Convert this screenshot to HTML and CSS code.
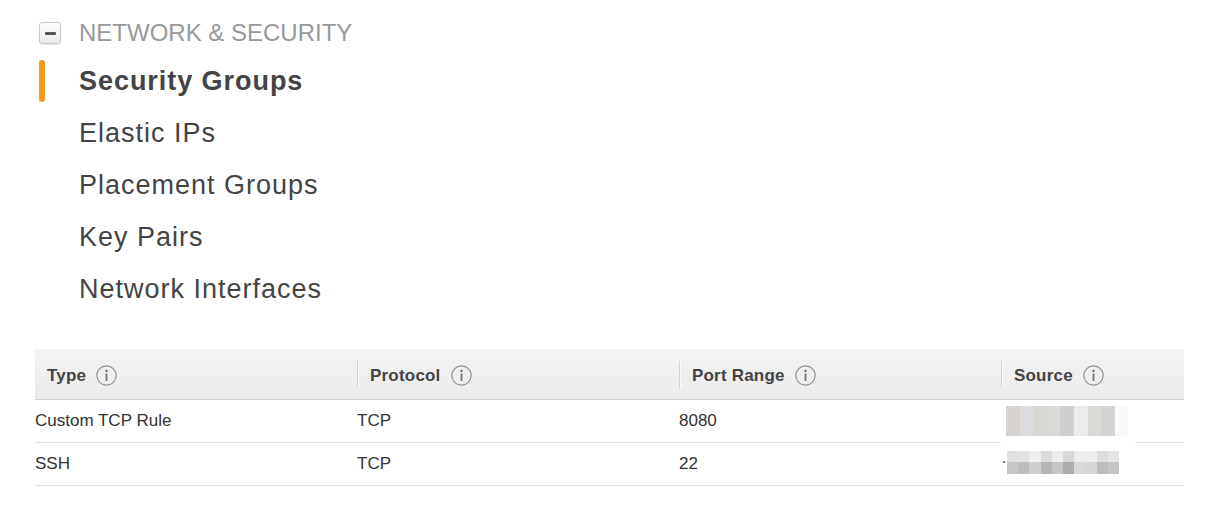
FILE: index.html
```html
<!DOCTYPE html>
<html>
<head>
<meta charset="utf-8">
<link rel="stylesheet" href="styles.css">
</head>
<body>
<nav class="nav">
  <div class="nav-head">
    <span class="toggle"><span class="toggle-bar"></span></span>
    <span class="nav-title">NETWORK &amp; SECURITY</span>
  </div>
  <ul class="nav-list">
    <li class="nav-item active">Security Groups</li>
    <li class="nav-item">Elastic IPs</li>
    <li class="nav-item">Placement Groups</li>
    <li class="nav-item">Key Pairs</li>
    <li class="nav-item">Network Interfaces</li>
  </ul>
</nav>

<div class="rules">
  <div class="row head">
    <div class="cell first">Type <svg class="info" viewBox="0 0 20 20"><circle cx="10" cy="10" r="9.2" fill="none" stroke="#8f8f8f" stroke-width="1.1"/><circle cx="10" cy="5.6" r="1.2" fill="#7a7a7a"/><rect x="9.1" y="8.1" width="1.8" height="7" fill="#7a7a7a"/></svg></div>
    <div class="cell sep">Protocol <svg class="info" viewBox="0 0 20 20"><circle cx="10" cy="10" r="9.2" fill="none" stroke="#8f8f8f" stroke-width="1.1"/><circle cx="10" cy="5.6" r="1.2" fill="#7a7a7a"/><rect x="9.1" y="8.1" width="1.8" height="7" fill="#7a7a7a"/></svg></div>
    <div class="cell sep">Port Range <svg class="info" viewBox="0 0 20 20"><circle cx="10" cy="10" r="9.2" fill="none" stroke="#8f8f8f" stroke-width="1.1"/><circle cx="10" cy="5.6" r="1.2" fill="#7a7a7a"/><rect x="9.1" y="8.1" width="1.8" height="7" fill="#7a7a7a"/></svg></div>
    <div class="cell sep">Source <svg class="info" viewBox="0 0 20 20"><circle cx="10" cy="10" r="9.2" fill="none" stroke="#8f8f8f" stroke-width="1.1"/><circle cx="10" cy="5.6" r="1.2" fill="#7a7a7a"/><rect x="9.1" y="8.1" width="1.8" height="7" fill="#7a7a7a"/></svg></div>
  </div>
  <div class="row body">
    <div class="cell">Custom TCP Rule</div>
    <div class="cell">TCP</div>
    <div class="cell">8080</div>
    <div class="cell src">
      <div class="blur blur-a">
        <div class="tiles">
          <span style="background:#d6d3d0"></span><span style="background:#dcdcde"></span><span style="background:#d9d7d4"></span><span style="background:#dbdad7"></span><span style="background:#cfcfcf"></span><span style="background:#ebebed"></span><span style="background:#dbdad6"></span><span style="background:#d3d3d5"></span><span style="background:#f8f9fb"></span>
        </div>
      </div>
    </div>
  </div>
  <div class="row body">
    <div class="cell">SSH</div>
    <div class="cell">TCP</div>
    <div class="cell">22</div>
    <div class="cell src">
      <div class="blur blur-b">
        <span class="dot"></span>
        <div class="tiles-b">
          <div class="tiles small">
            <span style="background:#e0e0e0"></span><span style="background:#e3e3e5"></span><span style="background:#eeeeee"></span><span style="background:#dcdcdc"></span><span style="background:#ececec"></span><span style="background:#d8d8d8"></span><span style="background:#ededee"></span><span style="background:#eeeeee"></span><span style="background:#dddddd"></span><span style="background:#e5e5e5"></span>
          </div>
          <div class="tiles small">
            <span style="background:#c6c6c6"></span><span style="background:#bdbdbf"></span><span style="background:#cfcfcf"></span><span style="background:#b5b5b5"></span><span style="background:#c5c5c5"></span><span style="background:#adadad"></span><span style="background:#d9d9db"></span><span style="background:#d6d6d6"></span><span style="background:#bcbcbc"></span><span style="background:#c4c4c4"></span>
          </div>
        </div>
      </div>
    </div>
  </div>
</div>
</body>
</html>
```

FILE: styles.css
```css
* { box-sizing: border-box; }
html, body { margin: 0; padding: 0; background: #fff; }
body {
  font-family: "Liberation Sans", Arial, Helvetica, sans-serif;
  color: #444;
}

.nav { padding: 17px 0 0 39px; }

.nav-head {
  display: flex;
  align-items: center;
  height: 32px;
}
.toggle {
  width: 22px;
  height: 22px;
  border: 1px solid #c9c9c9;
  border-radius: 3px;
  background: linear-gradient(#ffffff, #ebebeb);
  display: flex;
  align-items: center;
  justify-content: center;
  margin-right: 18px;
  box-shadow: 0 1px 1px rgba(0,0,0,0.08);
}
.toggle-bar {
  width: 11px;
  height: 3px;
  background: #555;
  border-radius: 1px;
}
.nav-title {
  font-size: 24px;
  color: #999;
}

.nav-list {
  list-style: none;
  margin: 6px 0 0 0;
  padding: 0;
}
.nav-item {
  position: relative;
  height: 52px;
  line-height: 52px;
  padding-left: 40px;
  font-size: 27px;
  letter-spacing: 1px;
  color: #444;
}
.nav-item.active {
  font-weight: bold;
  letter-spacing: 0.95px;
}
.nav-item.active::before {
  content: "";
  position: absolute;
  left: 0;
  top: 5px;
  width: 6px;
  height: 42px;
  background: #f7961c;
  border-radius: 3px;
}

.rules {
  margin: 34px 0 0 35px;
  width: 1149px;
}
.row {
  display: grid;
  grid-template-columns: 322px 322px 322px 183px;
}
.row.head {
  height: 51px;
  background: linear-gradient(#f3f3f3, #ebebeb);
  border-bottom: 1px solid #cfcfcf;
  font-weight: bold;
  font-size: 17px;
  letter-spacing: 0.2px;
  color: #444;
}
.row.head .cell {
  display: flex;
  align-items: center;
  padding: 3px 0 0 13px;
  position: relative;
}
.row.head .cell.first { padding-left: 12px; }
.row.head .cell.sep::before {
  content: "";
  position: absolute;
  left: 0;
  top: 12px;
  height: 27px;
  width: 1px;
  background: #d2d2d2;
  box-shadow: 1px 0 0 #fafafa;
}
.info {
  width: 21px;
  height: 21px;
  margin-left: 10px;
}

.row.body {
  height: 43px;
  border-bottom: 1px solid #dedede;
  font-size: 17px;
  color: #333;
}
.row.body .cell {
  display: flex;
  align-items: center;
}
.row.body .cell.src { position: relative; }

.blur {
  position: absolute;
  left: 0;
  background: #fff;
}
.blur-a {
  top: 4px;
  width: 134px;
  height: 47px;
  padding: 2px 0 0 5px;
  z-index: 2;
}
.tiles { display: flex; }
.tiles span { width: 13.6px; height: 30px; }
.blur-b {
  top: 7px;
  display: flex;
  align-items: center;
  padding-left: 2px;
}
.dot {
  width: 2px;
  height: 2px;
  background: #8a6a55;
  margin-right: 2px;
}
.tiles-b { display: flex; flex-direction: column; }
.tiles.small span { width: 11.2px; height: 12px; }
```
